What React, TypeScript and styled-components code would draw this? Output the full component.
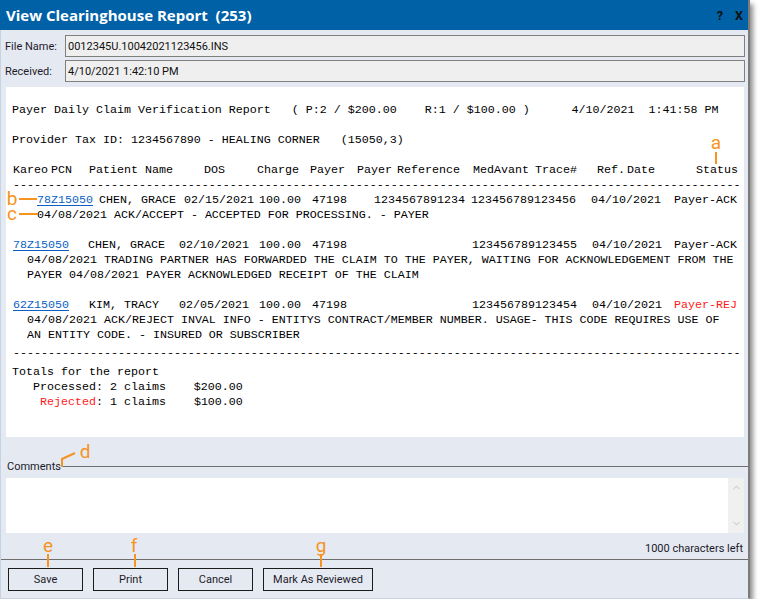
import styled, { createGlobalStyle } from "styled-components";
import { ChevronUp, ChevronDown } from "lucide-react";

const GlobalStyle = createGlobalStyle`
  body {
    margin: 0;
    background: #ffffff;
    font-family: Roboto, "Liberation Sans", sans-serif;
  }
`;

const Window = styled.div`
  position: relative;
  width: 750px;
  height: 599px;
  box-sizing: border-box;
  display: flex;
  flex-direction: column;
  background: #e5eaf2;
  border-left: 1px solid #c6d3e6;
  border-right: 2px solid #7b7b7b;
  border-bottom: 1px solid #c6d3e6;
  box-shadow: 3px 4px 5px rgba(0, 0, 0, 0.45);
`;

const TitleBar = styled.div`
  height: 30px;
  margin-left: -1px;
  padding: 0 5px 0 6px;
  display: flex;
  align-items: center;
  justify-content: space-between;
  background: #0061a7;
`;

const Title = styled.div`
  color: #ffffff;
  font-family: "Open Sans", Roboto, sans-serif;
  font-size: 15px;
  font-weight: 700;
  white-space: pre;
`;

const TitleButtons = styled.div`
  display: flex;
  gap: 12px;
  color: #111111;
  font-size: 12.5px;
  font-weight: 700;
`;

const Body = styled.div`
  flex: 1;
  display: flex;
  flex-direction: column;
  padding: 5px 4px 0 5px;
`;

const FieldRow = styled.div<{ $gap?: number }>`
  display: flex;
  align-items: center;
  margin-top: ${(p) => p.$gap ?? 0}px;
`;

const FieldLabel = styled.div`
  width: 60px;
  margin-left: -1px;
  font-size: 11px;
  color: #1d1a2a;
`;

const FieldBox = styled.div`
  flex: 1;
  height: 22px;
  margin-right: -1px;
  box-sizing: border-box;
  display: flex;
  align-items: center;
  padding-left: 2px;
  background: #efefef;
  border: 1px solid #7f7f7f;
  font-size: 11px;
  color: #111111;
`;

const Report = styled.div`
  margin-top: 5px;
  height: 350px;
  box-sizing: border-box;
  padding-top: 16px;
  overflow: hidden;
  background: #ffffff;
  font-family: "Liberation Mono", "Courier New", monospace;
  font-size: 11.67px;
  line-height: 15px;
  color: #000000;
`;

const Line = styled.div<{ $indent: number; $gap?: number }>`
  padding-left: ${(p) => p.$indent}px;
  margin-top: ${(p) => p.$gap ?? 0}px;
  white-space: pre;
`;

const Dashes = styled.div<{ $gap?: number }>`
  width: 727px;
  margin-left: 7px;
  margin-top: ${(p) => p.$gap ?? 0}px;
  overflow: hidden;
  white-space: pre;
`;

const Row = styled.div<{ $indent: number; $cols: string; $gap?: number }>`
  display: grid;
  grid-template-columns: ${(p) => p.$cols};
  padding-left: ${(p) => p.$indent}px;
  margin-top: ${(p) => p.$gap ?? 0}px;
  white-space: pre;
`;

const HeadCell = styled.span<{ $tight?: number }>`
  word-spacing: ${(p) => p.$tight ?? 0}px;
`;

const PcnLink = styled.a`
  color: #0b5fc4;
  text-decoration: underline;
  text-underline-offset: 2px;
`;

const Red = styled.span`
  color: #ff1a1a;
`;

const CommentsHeader = styled.div`
  margin-top: 22px;
  margin-right: -4px;
  height: 14px;
  display: flex;
  align-items: center;
  gap: 2px;
`;

const CommentsLabel = styled.div`
  font-size: 11px;
  color: #1d1a2a;
  margin-left: 1px;
`;

const Rule = styled.div`
  flex: 1;
  height: 1px;
  background: #6e6e6e;
`;

const CommentBox = styled.div`
  margin-top: 5px;
  height: 55px;
  display: flex;
  justify-content: flex-end;
  background: #ffffff;
`;

const ScrollBar = styled.div`
  width: 16px;
  display: flex;
  flex-direction: column;
  align-items: center;
  justify-content: space-between;
  padding: 4px 0;
  box-sizing: border-box;
  background: #f0f0f0;
  color: #a8a8a8;
`;

const Counter = styled.div`
  margin-top: 8px;
  height: 15px;
  padding-right: 1px;
  text-align: right;
  font-size: 11px;
  line-height: 15px;
  color: #1d1a2a;
`;

const Separator = styled.div`
  margin: 3px -4px 0 -5px;
  height: 1px;
  background: #6e6e6e;
`;

const ButtonRow = styled.div`
  margin-top: 8px;
  margin-left: 2px;
  display: flex;
  gap: 10px;
`;

const Button = styled.button<{ $w?: number }>`
  width: ${(p) => p.$w ?? 75}px;
  height: 23px;
  padding: 0;
  background: #e5eaf2;
  border: 1px solid #1b1b1b;
  font-family: Roboto, "Liberation Sans", sans-serif;
  font-size: 11px;
  color: #1d1a2a;
`;

const orange = "#f7931e";

const Marker = styled.span<{ $x: number; $y: number }>`
  position: absolute;
  left: ${(p) => p.$x}px;
  top: ${(p) => p.$y}px;
  transform: translate(-50%, -50%);
  font-family: Roboto, "Liberation Sans", sans-serif;
  font-size: 19px;
  line-height: 1;
  color: ${orange};
`;

const Tick = styled.div<{ $x: number; $y: number; $w: number; $h: number }>`
  position: absolute;
  left: ${(p) => p.$x}px;
  top: ${(p) => p.$y}px;
  width: ${(p) => p.$w}px;
  height: ${(p) => p.$h}px;
  background: ${orange};
`;

const Connector = styled.svg`
  position: absolute;
  left: 58px;
  top: 448px;
`;

const dashes = "-".repeat(110);

const headCols = "76px 115px 53px 53px 47px 116px 124px 99px auto";
const row1Cols = "62px 85px 75px 53px 62px 97px 120px 83px auto";
const row2Cols = "75px 91px 80px 53px 62px 98px 120px 82px auto";
const row3Cols = "76px 90px 80px 53px 62px 98px 120px 82px auto";

export default function App() {
  return (
    <>
      <GlobalStyle />
      <Window>
        <TitleBar>
          <Title>View Clearinghouse Report  (253)</Title>
          <TitleButtons>
            <span>?</span>
            <span>X</span>
          </TitleButtons>
        </TitleBar>
        <Body>
          <FieldRow>
            <FieldLabel>File Name:</FieldLabel>
            <FieldBox>0012345U.10042021123456.INS</FieldBox>
          </FieldRow>
          <FieldRow $gap={3}>
            <FieldLabel>Received:</FieldLabel>
            <FieldBox>4/10/2021 1:42:10 PM</FieldBox>
          </FieldRow>

          <Report>
            <Line $indent={6}>
              {"Payer Daily Claim Verification Report   ( P:2 / $200.00    R:1 / $100.00 )      4/10/2021  1:41:58 PM"}
            </Line>
            <Line $indent={6} $gap={15}>
              {"Provider Tax ID: 1234567890 - HEALING CORNER   (15050,3)"}
            </Line>
            <Row $indent={7} $cols={headCols} $gap={15}>
              <HeadCell $tight={-4}>Kareo PCN</HeadCell>
              <HeadCell>Patient Name</HeadCell>
              <HeadCell>DOS</HeadCell>
              <HeadCell>Charge</HeadCell>
              <HeadCell>Payer</HeadCell>
              <HeadCell $tight={-2}>Payer Reference</HeadCell>
              <HeadCell $tight={-1}>MedAvant Trace#</HeadCell>
              <HeadCell $tight={-5}>Ref. Date</HeadCell>
              <HeadCell>Status</HeadCell>
            </Row>
            <Dashes>{dashes}</Dashes>

            <Row $indent={31} $cols={row1Cols}>
              <PcnLink>78Z15050</PcnLink>
              <span>CHEN, GRACE</span>
              <span>02/15/2021</span>
              <span>100.00</span>
              <span>47198</span>
              <span>1234567891234</span>
              <span>123456789123456</span>
              <span>04/10/2021</span>
              <span>Payer-ACK</span>
            </Row>
            <Line $indent={31}>04/08/2021 ACK/ACCEPT - ACCEPTED FOR PROCESSING. - PAYER</Line>

            <Row $indent={7} $cols={row2Cols} $gap={15}>
              <PcnLink>78Z15050</PcnLink>
              <span>CHEN, GRACE</span>
              <span>02/10/2021</span>
              <span>100.00</span>
              <span>47198</span>
              <span></span>
              <span>123456789123455</span>
              <span>04/10/2021</span>
              <span>Payer-ACK</span>
            </Row>
            <Line $indent={21}>
              04/08/2021 TRADING PARTNER HAS FORWARDED THE CLAIM TO THE PAYER, WAITING FOR ACKNOWLEDGEMENT FROM THE
            </Line>
            <Line $indent={21}>PAYER 04/08/2021 PAYER ACKNOWLEDGED RECEIPT OF THE CLAIM</Line>

            <Row $indent={7} $cols={row3Cols} $gap={15}>
              <PcnLink>62Z15050</PcnLink>
              <span>KIM, TRACY</span>
              <span>02/05/2021</span>
              <span>100.00</span>
              <span>47198</span>
              <span></span>
              <span>123456789123454</span>
              <span>04/10/2021</span>
              <Red>Payer-REJ</Red>
            </Row>
            <Line $indent={21}>
              04/08/2021 ACK/REJECT INVAL INFO - ENTITYS CONTRACT/MEMBER NUMBER. USAGE- THIS CODE REQUIRES USE OF
            </Line>
            <Line $indent={21}>AN ENTITY CODE. - INSURED OR SUBSCRIBER</Line>

            <Dashes $gap={3}>{dashes}</Dashes>
            <Line $indent={6} $gap={4}>Totals for the report</Line>
            <Line $indent={6}>{"   Processed: 2 claims    $200.00"}</Line>
            <Line $indent={6}>
              {"    "}
              <Red>Rejected</Red>
              {": 1 claims    $100.00"}
            </Line>
          </Report>

          <CommentsHeader>
            <CommentsLabel>Comments</CommentsLabel>
            <Rule />
          </CommentsHeader>
          <CommentBox>
            <ScrollBar>
              <ChevronUp size={11} strokeWidth={1.5} />
              <ChevronDown size={11} strokeWidth={1.5} />
            </ScrollBar>
          </CommentBox>
          <Counter>1000 characters left</Counter>
          <Separator />
          <ButtonRow>
            <Button>Save</Button>
            <Button>Print</Button>
            <Button>Cancel</Button>
            <Button $w={110}>Mark As Reviewed</Button>
          </ButtonRow>
        </Body>

        <Marker $x={715} $y={142}>a</Marker>
        <Tick $x={714} $y={152} $w={2} $h={12} />
        <Marker $x={11} $y={198}>b</Marker>
        <Tick $x={18} $y={198} $w={18} $h={2} />
        <Marker $x={11} $y={213}>c</Marker>
        <Tick $x={18} $y={213} $w={19} $h={2} />
        <Marker $x={84} $y={451}>d</Marker>
        <Connector width="20" height="20" viewBox="0 0 20 20">
          <polyline points="3,19 3,11 16,5" fill="none" stroke={orange} strokeWidth="2" />
        </Connector>
        <Marker $x={47} $y={545}>e</Marker>
        <Tick $x={46} $y={554} $w={2} $h={13} />
        <Marker $x={133} $y={545}>f</Marker>
        <Tick $x={133} $y={554} $w={2} $h={13} />
        <Marker $x={320} $y={545}>g</Marker>
        <Tick $x={319} $y={554} $w={2} $h={13} />
      </Window>
    </>
  );
}
